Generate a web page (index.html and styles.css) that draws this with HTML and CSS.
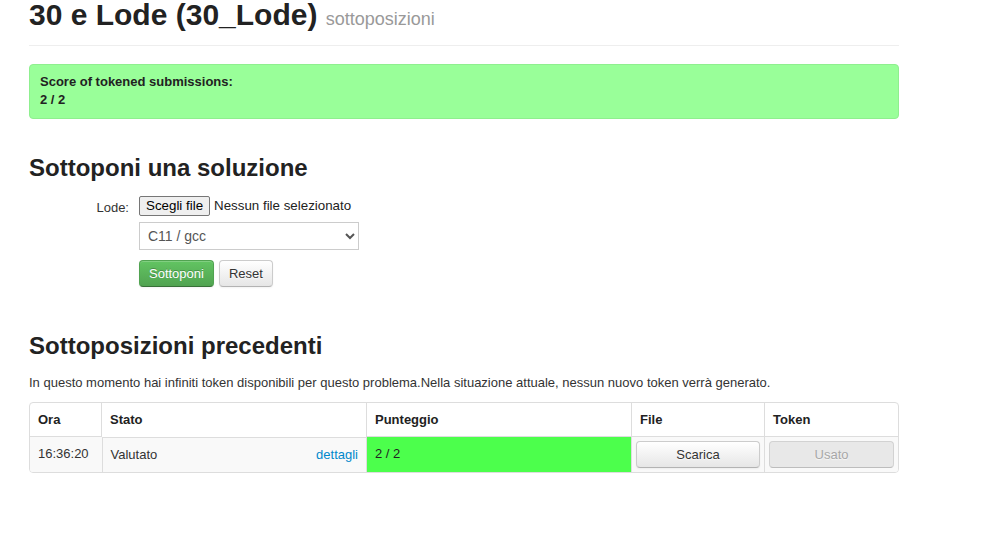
FILE: index.html
```html
<!DOCTYPE html>
<html lang="it">
<head>
<meta charset="utf-8">
<title>30 e Lode (30_Lode) sottoposizioni</title>
<link rel="stylesheet" href="styles.css">
</head>
<body>
<div class="page">
  <div class="page-header">
    <h1>30 e Lode (30_Lode) <small>sottoposizioni</small></h1>
  </div>

  <div class="alert">
    <strong>Score of tokened submissions:</strong><br>
    <strong>2 / 2</strong>
  </div>

  <h2 class="section-title">Sottoponi una soluzione</h2>
  <form class="submit-form">
    <div class="form-row">
      <label class="form-label">Lode:</label>
      <div class="form-controls">
        <div class="file-input"><span class="file-btn">Scegli file</span><span class="file-text">Nessun file selezionato</span></div>
      </div>
    </div>
    <div class="form-row">
      <div class="form-label"></div>
      <div class="form-controls">
        <select class="lang-select"><option>C11 / gcc</option></select>
      </div>
    </div>
    <div class="form-row">
      <div class="form-label"></div>
      <div class="form-controls actions">
        <button type="button" class="btn btn-success">Sottoponi</button>
        <button type="button" class="btn">Reset</button>
      </div>
    </div>
  </form>

  <h2 class="section-title second">Sottoposizioni precedenti</h2>
  <p class="token-info">In questo momento hai infiniti token disponibili per questo problema.Nella situazione attuale, nessun nuovo token verrà generato.</p>

  <div class="table-wrap">
    <table class="subs">
      <thead>
        <tr>
          <th class="c-ora">Ora</th>
          <th class="c-stato">Stato</th>
          <th class="c-punt">Punteggio</th>
          <th class="c-file">File</th>
          <th class="c-token">Token</th>
        </tr>
      </thead>
      <tbody>
        <tr>
          <td>16:36:20</td>
          <td class="stato"><span>Valutato</span><a href="#" class="details">dettagli</a></td>
          <td class="score">2 / 2</td>
          <td class="btn-cell"><button type="button" class="btn btn-block">Scarica</button></td>
          <td class="btn-cell"><button type="button" class="btn btn-block disabled">Usato</button></td>
        </tr>
      </tbody>
    </table>
  </div>
</div>
</body>
</html>
```

FILE: styles.css
```css
html, body {
  margin: 0;
  padding: 0;
  background: #fff;
}
body {
  font-family: "Liberation Sans", Arial, sans-serif;
  font-size: 13px;
  line-height: 18px;
  color: #333;
}
.page {
  width: 870px;
  margin-left: 29px;
}
.page-header {
  border-bottom: 1px solid #eee;
  padding-bottom: 15px;
}
.page-header h1 {
  margin: 0;
  font-size: 30px;
  line-height: 30px;
  font-weight: bold;
  color: #222;
}
.page-header small {
  font-size: 18px;
  line-height: 18px;
  font-weight: normal;
  color: #999;
}
.alert {
  margin-top: 18px;
  background: #99ff99;
  border: 1px solid #8fef8f;
  border-radius: 4px;
  padding: 8px 10px 9px;
  color: #222;
}
.section-title {
  margin: 34px 0 12px;
  font-size: 24px;
  line-height: 30px;
  font-weight: bold;
  color: #222;
}
.section-title.second {
  margin-top: 44px;
  margin-bottom: 13px;
}
.submit-form {
  display: flex;
  flex-direction: column;
  gap: 5px;
}
.form-row {
  display: flex;
  gap: 10px;
}
.form-label {
  width: 100px;
  text-align: right;
  padding-top: 4px;
}
.file-input {
  display: flex;
  align-items: center;
  gap: 4px;
  font-size: 13.33px;
  height: 22px;
}
.file-btn {
  display: inline-block;
  background: #efefef;
  border: 1px solid #767676;
  border-radius: 2px;
  padding: 1px 6px;
  line-height: 16px;
  color: #000;
}
.file-text {
  color: #222;
}
.lang-select {
  width: 220px;
  height: 28px;
  border: 1px solid #ccc;
  border-radius: 0;
  background: #fff;
  font-family: "Liberation Sans", Arial, sans-serif;
  font-size: 14px;
  color: #555;
  padding: 0 4px;
}
.actions {
  display: flex;
  gap: 5px;
  padding-top: 5px;
}
.btn {
  display: inline-block;
  height: 27px;
  padding: 0 9px;
  font-family: "Liberation Sans", Arial, sans-serif;
  font-size: 13px;
  color: #333;
  text-shadow: 0 1px 1px rgba(255,255,255,0.75);
  background: linear-gradient(#ffffff, #e6e6e6);
  border: 1px solid #ccc;
  border-bottom-color: #b3b3b3;
  border-radius: 4px;
  box-shadow: inset 0 1px 0 rgba(255,255,255,0.2), 0 1px 2px rgba(0,0,0,0.05);
  cursor: pointer;
}
.btn-success {
  color: #fff;
  text-shadow: 0 -1px 0 rgba(0,0,0,0.25);
  background: linear-gradient(#62c462, #51a351);
  border-color: #51a351 #51a351 #387038;
}
.token-info {
  margin: 0 0 10px;
}
.table-wrap {
  border: 1px solid #ddd;
  border-radius: 4px;
  overflow: hidden;
}
.subs {
  width: 100%;
  border-collapse: collapse;
  table-layout: fixed;
}
.subs th, .subs td {
  padding: 8px;
  text-align: left;
  vertical-align: top;
  line-height: 18px;
  border-left: 1px solid #ddd;
}
.subs th {
  padding-bottom: 7px;
}
.subs th:first-child, .subs td:first-child {
  border-left: 0;
}
.subs th {
  font-weight: bold;
  color: #222;
}
.subs td {
  border-top: 1px solid #ddd;
  background: #f9f9f9;
}
.c-ora { width: 55px; }
.c-stato { width: 248px; }
.c-punt { width: 248px; }
.c-file { width: 116px; }
.stato {
  display: flex;
  justify-content: space-between;
}
.details {
  color: #0088cc;
  text-decoration: none;
}
.subs td.score {
  background: #4cff4c;
  color: #222;
}
.subs td.btn-cell {
  padding: 4px;
}
.btn-block {
  width: 100%;
  height: 27px;
}
.btn.disabled {
  color: #999;
  background: #e6e6e6;
  opacity: 0.85;
  box-shadow: none;
  cursor: default;
}
```
